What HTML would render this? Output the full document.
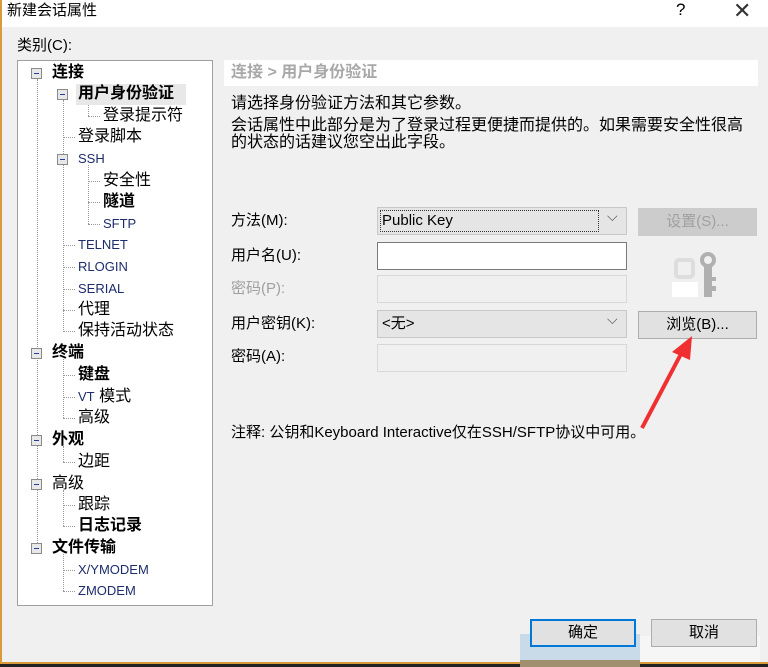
<!DOCTYPE html><html><head><meta charset="utf-8"><style>
body{margin:0;width:768px;height:667px;background:#f0f0f0;position:relative;overflow:hidden;font-family:"Liberation Sans","Noto Sans CJK SC",sans-serif;color:#000}
.a{position:absolute;white-space:nowrap}
.t{font-size:16px;line-height:20px}
.b{font-weight:bold}
.e{font-size:13px;color:#1e2c6e}
.bx{position:absolute;width:9px;height:9px;border:1px solid #8a8a8a;background:#e8e8e8}
.bx:after{content:"";position:absolute;left:2px;top:4px;width:5px;height:1px;background:#2040a0}
.vl{position:absolute;border-left:1px dotted #999;width:0}
.hl{position:absolute;border-top:1px dotted #999;height:0}
.in{position:absolute;border:1px solid #d8d8d8;background:#f0f0f0;box-sizing:border-box}
.btn{position:absolute;border:1px solid #adadad;background:#e1e1e1;box-sizing:border-box;text-align:center;font-size:15px;line-height:25px}
</style></head><body>
<div class="a" style="left:0;top:0;width:768px;height:27px;background:#fff"></div>
<div class="a" style="left:0;top:0;width:2px;height:667px;background:#d99a3c"></div>
<div class="a t" style="left:7px;top:1px;font-size:15px">新建会话属性</div>
<div class="a" style="left:676px;top:0px;font-size:17px">?</div>
<div class="a" style="left:733px;top:-2px;font-size:22px;font-weight:300;color:#333">✕</div>
<div class="a t" style="left:17px;top:36px;font-size:15px">类别(C):</div>
<div class="a" style="left:17px;top:60px;width:196px;height:546px;background:#fff;border:1px solid #a0a0a0;box-sizing:border-box"></div>
<div class="vl" style="left:37px;top:79px;height:470px"></div>
<div class="vl" style="left:63px;top:100px;height:232px"></div>
<div class="vl" style="left:88px;top:101px;height:15px"></div>
<div class="vl" style="left:88px;top:165px;height:59px"></div>
<div class="vl" style="left:63px;top:359px;height:59px"></div>
<div class="vl" style="left:63px;top:446px;height:16px"></div>
<div class="vl" style="left:63px;top:490px;height:36px"></div>
<div class="vl" style="left:63px;top:554px;height:37px"></div>
<div class="bx" style="left:31px;top:68px"></div><div class="a t b" style="left:52px;top:63px">连接</div>
<div class="a" style="left:76px;top:84px;width:110px;height:21px;background:#e8e8e8"></div>
<div class="bx" style="left:57px;top:89px"></div><div class="a t b" style="left:78px;top:84px">用户身份验证</div>
<div class="hl" style="left:88px;top:116px;width:12px"></div><div class="a t" style="left:103px;top:106px">登录提示符</div>
<div class="hl" style="left:63px;top:137px;width:12px"></div><div class="a t" style="left:78px;top:127px">登录脚本</div>
<div class="bx" style="left:57px;top:154px"></div><div class="a e" style="left:78px;top:151px">SSH</div>
<div class="hl" style="left:88px;top:181px;width:12px"></div><div class="a t" style="left:103px;top:171px">安全性</div>
<div class="hl" style="left:88px;top:202px;width:12px"></div><div class="a t b" style="left:103px;top:192px">隧道</div>
<div class="hl" style="left:88px;top:224px;width:12px"></div><div class="a e" style="left:103px;top:216px">SFTP</div>
<div class="hl" style="left:63px;top:245px;width:12px"></div><div class="a e" style="left:78px;top:237px">TELNET</div>
<div class="hl" style="left:63px;top:267px;width:12px"></div><div class="a e" style="left:78px;top:259px">RLOGIN</div>
<div class="hl" style="left:63px;top:289px;width:12px"></div><div class="a e" style="left:78px;top:281px">SERIAL</div>
<div class="hl" style="left:63px;top:310px;width:12px"></div><div class="a t" style="left:78px;top:300px">代理</div>
<div class="hl" style="left:63px;top:331px;width:12px"></div><div class="a t" style="left:78px;top:321px">保持活动状态</div>
<div class="bx" style="left:31px;top:348px"></div><div class="a t b" style="left:52px;top:343px">终端</div>
<div class="hl" style="left:63px;top:375px;width:12px"></div><div class="a t b" style="left:78px;top:365px">键盘</div>
<div class="hl" style="left:63px;top:397px;width:12px"></div><div class="a t" style="left:78px;top:387px"><span class="e">VT</span> 模式</div>
<div class="hl" style="left:63px;top:418px;width:12px"></div><div class="a t" style="left:78px;top:408px">高级</div>
<div class="bx" style="left:31px;top:435px"></div><div class="a t b" style="left:52px;top:430px">外观</div>
<div class="hl" style="left:63px;top:462px;width:12px"></div><div class="a t" style="left:78px;top:452px">边距</div>
<div class="bx" style="left:31px;top:479px"></div><div class="a t" style="left:52px;top:474px">高级</div>
<div class="hl" style="left:63px;top:505px;width:12px"></div><div class="a t" style="left:78px;top:495px">跟踪</div>
<div class="hl" style="left:63px;top:526px;width:12px"></div><div class="a t b" style="left:78px;top:516px">日志记录</div>
<div class="bx" style="left:31px;top:543px"></div><div class="a t b" style="left:52px;top:538px">文件传输</div>
<div class="hl" style="left:63px;top:570px;width:12px"></div><div class="a e" style="left:78px;top:562px">X/YMODEM</div>
<div class="hl" style="left:63px;top:591px;width:12px"></div><div class="a e" style="left:78px;top:583px">ZMODEM</div>
<div class="a" style="left:224px;top:60px;width:534px;height:26px;background:#fff"></div>
<div class="a t b" style="left:231px;top:63px;color:#a8a8a8">连接 &gt; 用户身份验证</div>
<div class="a t" style="left:231px;top:94px">请选择身份验证方法和其它参数。</div>
<div class="a t" style="left:231px;top:117px;line-height:17px">会话属性中此部分是为了登录过程更便捷而提供的。如果需要安全性很高<br>的状态的话建议您空出此字段。</div>
<div class="a t" style="left:231px;top:211px;font-size:15px">方法(M):</div>
<div class="a t" style="left:231px;top:246px;font-size:15px">用户名(U):</div>
<div class="a t" style="left:231px;top:279px;color:#a0a0a0;font-size:15px">密码(P):</div>
<div class="a t" style="left:231px;top:314px;font-size:15px">用户密钥(K):</div>
<div class="a t" style="left:231px;top:347px;font-size:15px">密码(A):</div>
<div class="in" style="left:377px;top:207px;width:250px;height:28px;background:#e5e5e5;border-color:#c8c8c8"></div>
<div class="a" style="left:380px;top:210px;width:217px;height:20px;border:1px dotted #333"></div>
<div class="a t" style="left:382px;top:211px;font-size:15px">Public Key</div>
<div class="a" style="left:607px;top:208px;font-size:14px;color:#555">⌵</div>
<div class="in" style="left:377px;top:242px;width:250px;height:28px;background:#fff;border-color:#7a7a7a"></div>
<div class="in" style="left:377px;top:275px;width:250px;height:28px"></div>
<div class="in" style="left:377px;top:310px;width:250px;height:28px;background:#e5e5e5;border-color:#c8c8c8"></div>
<div class="a t" style="left:382px;top:314px;font-size:15px">&lt;无&gt;</div>
<div class="a" style="left:607px;top:311px;font-size:14px;color:#555">⌵</div>
<div class="in" style="left:377px;top:344px;width:250px;height:28px"></div>
<div class="btn" style="left:638px;top:208px;width:119px;height:28px;background:#cccccc;border-color:#cccccc;color:#a0a0a0">设置(S)...</div>
<div class="btn" style="left:638px;top:311px;width:119px;height:28px">浏览(B)...</div>
<svg class="a" style="left:670px;top:252px" width="50" height="46"><rect x="6" y="8" width="17" height="17" rx="3" fill="none" stroke="#ddd" stroke-width="4"/><rect x="2" y="30" width="26" height="15" fill="#fff"/><circle cx="38" cy="8" r="6" fill="none" stroke="#b0b0b0" stroke-width="4"/><rect x="34" y="13" width="8" height="32" fill="#b0b0b0"/><rect x="42" y="25" width="4" height="4" fill="#b0b0b0"/><rect x="42" y="34" width="4" height="5" fill="#b0b0b0"/></svg>
<div class="a t" style="left:231px;top:423px;font-size:15px">注释: 公钥和Keyboard Interactive仅在SSH/SFTP协议中可用。</div>
<svg class="a" style="left:630px;top:330px" width="80" height="110"><line x1="12" y1="98" x2="52" y2="22" stroke="#f03030" stroke-width="4"/><polygon points="62,6 42,22 60,30" fill="#f03030"/></svg>
<div class="a" style="left:520px;top:634px;width:120px;height:28px;background:#c9dbe8"></div>
<div class="a" style="left:640px;top:636px;width:120px;height:26px;background:#f6f6f6"></div>
<div class="btn" style="left:530px;top:619px;width:106px;height:28px;border:2px solid #0078d7;line-height:24px">确定</div>
<div class="btn" style="left:651px;top:619px;width:106px;height:28px">取消</div>
<div class="a" style="left:0;top:662px;width:768px;height:2px;background:#d99a3c"></div>
<div class="a" style="left:0;top:664px;width:768px;height:3px;background:#222"></div>
<div class="a" style="left:520px;top:660px;width:120px;height:7px;background:#a09070"></div>
</body></html>
